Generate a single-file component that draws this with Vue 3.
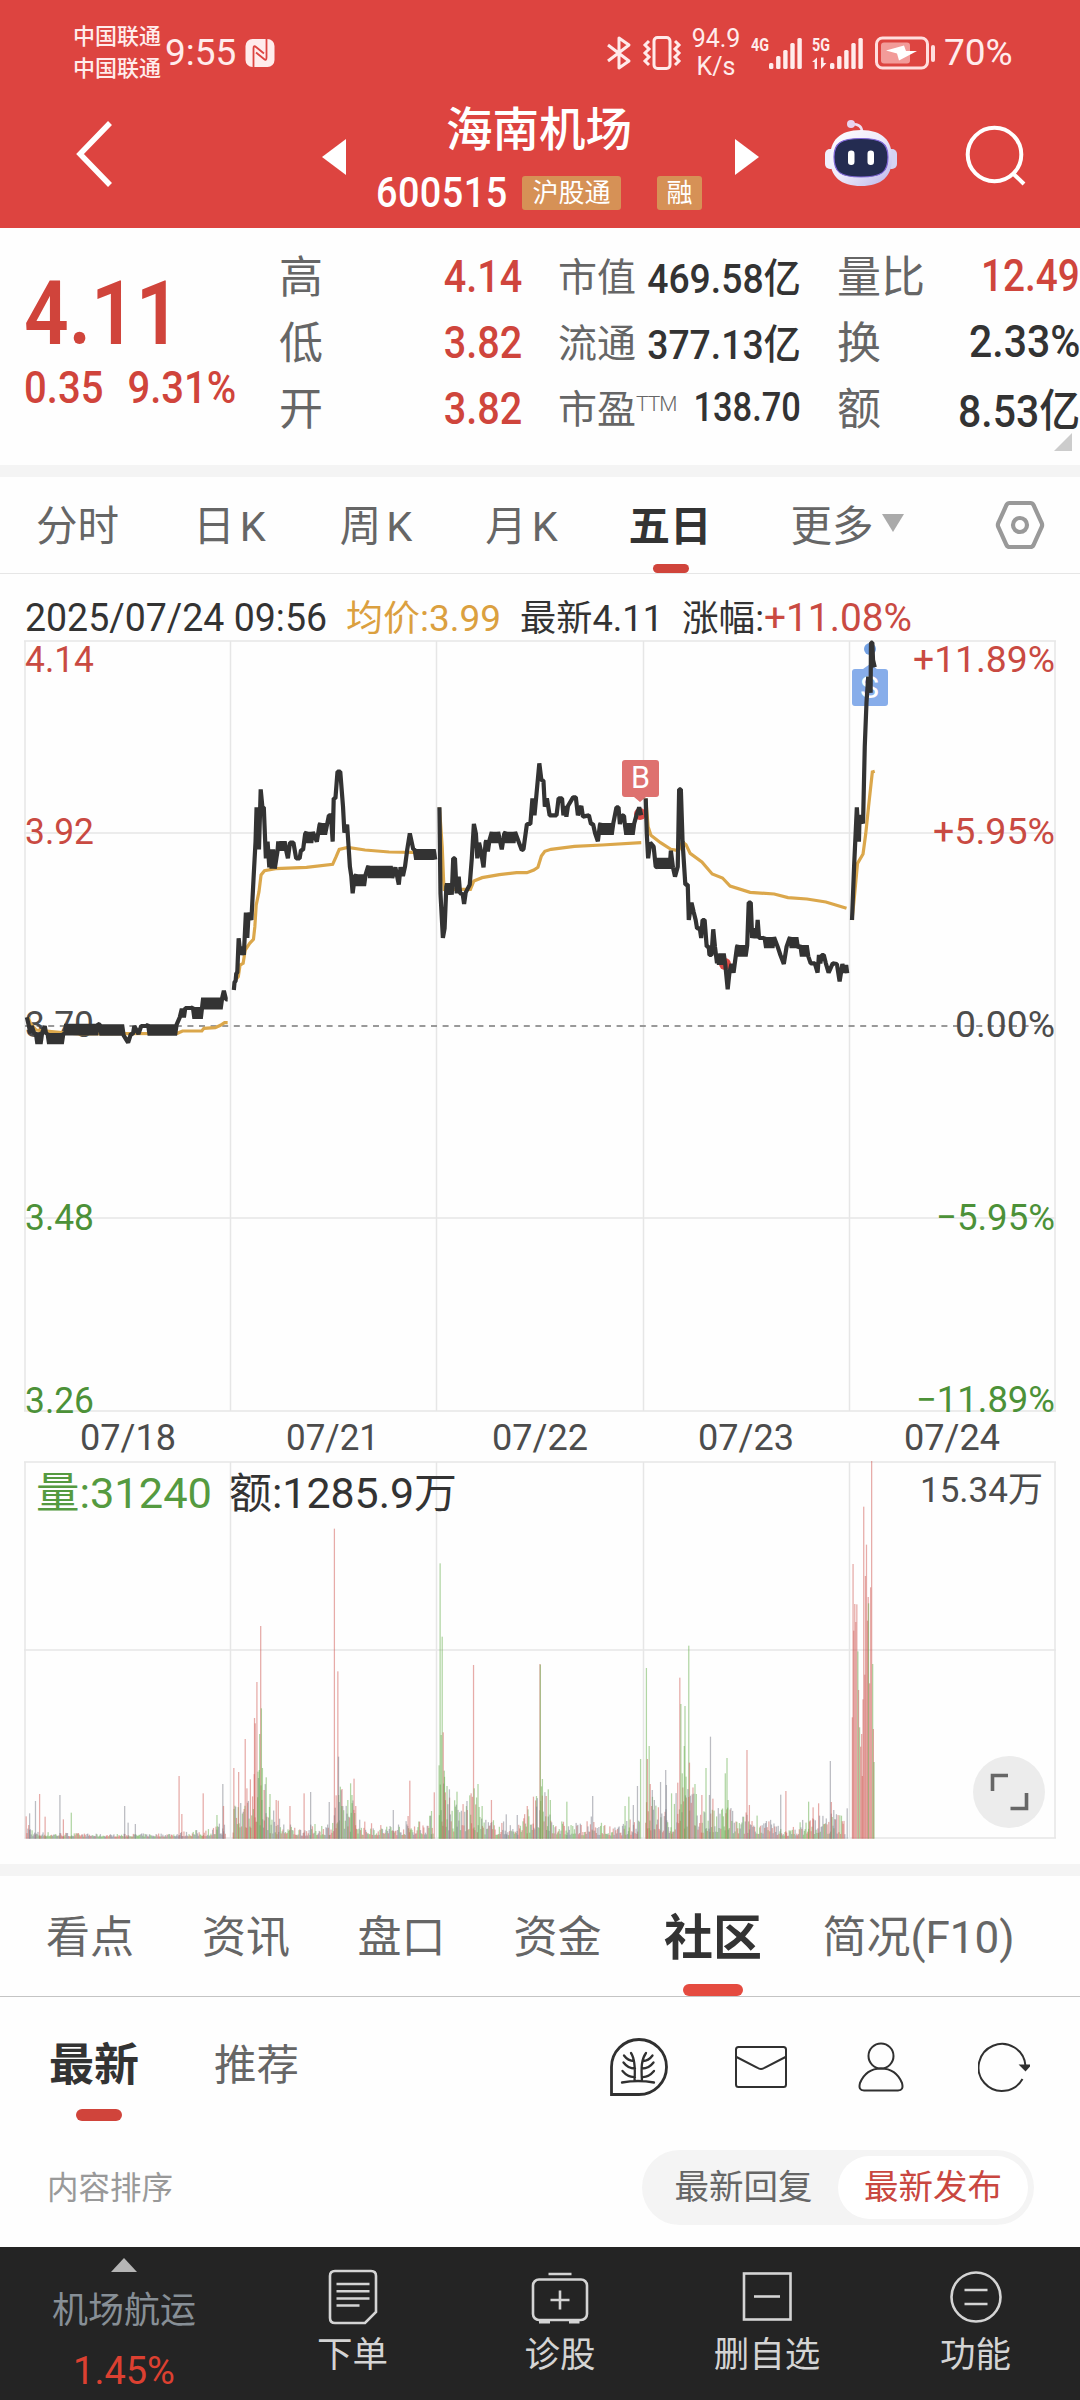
<template>
  <div class="stock-page">
    <header class="page-header">
      <div class="status-bar">
        <div class="carriers">
          <span>中国联通</span>
          <span>中国联通</span>
        </div>
        <span class="clock">9:55</span>
        <svg class="nfc" width="30" height="30" viewBox="0 0 30 30">
          <rect x="0.5" y="1" width="29" height="28" rx="7" fill="#ffecec" />
          <path d="M8.500 29V10.500Q8.500 7 11 9L19 15.500" fill="none" stroke="#dd4440" stroke-width="1.800" />
          <path d="M21.500 1V19.500Q21.500 23 19 21L11 14.500" fill="none" stroke="#dd4440" stroke-width="1.800" />
        </svg>
        <div class="status-right">
          <svg width="26" height="36" viewBox="0 0 26 36" fill="none" stroke="#ffeaea" stroke-width="3">
            <path d="M2 10L23 26L13 33V3L23 10L2 26" stroke-linejoin="round" />
          </svg>
          <svg class="vibrate" width="40" height="36" viewBox="0 0 40 36" fill="none" stroke="#ffeaea" stroke-width="3">
            <rect x="12" y="2.500" width="16" height="31" rx="3.500" />
            <path d="M7 6l-4 4 4 4-4 4 4 4-4 4 4 4M33 6l4 4-4 4 4 4-4 4 4 4-4 4" />
          </svg>
          <div class="net-speed"><span>94.9</span><span>K/s</span></div>
          <svg class="signal" width="52" height="36" viewBox="0 0 52 36" fill="#ffecec">
            <text x="0" y="16" font-size="18" font-weight="700" textLength="18" lengthAdjust="spacingAndGlyphs">4G</text>
            <rect v-for="(h, i) in signalBars" :key="i" :x="18 + i * 7.1" :y="34 - h" width="4.400" :height="h" rx="1.500" />
          </svg>
          <svg class="signal second" width="52" height="36" viewBox="0 0 52 36" fill="#ffecec">
            <text x="0" y="16" font-size="18" font-weight="700" textLength="18" lengthAdjust="spacingAndGlyphs">5G</text>
            <path d="M0 27L5 22.500V34H2.600V27ZM9 22.500h2.500v5.500h3L9 34Z" />
            <rect v-for="(h, i) in signalBars" :key="i" :x="18 + i * 7.1" :y="34 - h" width="4.400" :height="h" rx="1.500" />
          </svg>
          <svg class="battery" width="61" height="34" viewBox="0 0 61 34">
            <rect x="1.500" y="2" width="51" height="30" rx="6" fill="none" stroke="#ffdede" stroke-width="3" />
            <rect x="6" y="6.500" width="29" height="21" rx="3" fill="#f29b99" />
            <path d="M11 14.500L29 9.500L31 15H42L24 24.500L22 17.500Z" fill="#fff" />
            <rect x="56" y="9" width="4" height="17" rx="2" fill="#ffdede" />
          </svg>
          <span class="battery-text">70%</span>
        </div>
      </div>

      <div class="nav-bar">
        <svg class="back" width="38" height="70" viewBox="0 0 38 70" fill="none" stroke="#fff" stroke-width="5.500">
          <path d="M35 4L5 35L35 66" />
        </svg>
        <svg class="prev" width="24" height="36" viewBox="0 0 24 36"><path d="M24 0V36L0 18Z" fill="#fff" /></svg>
        <div class="nav-title">
          <h1>海南机场</h1>
          <div class="code-row">
            <span class="code">600515</span>
            <span class="badge">沪股通</span>
            <span class="badge short">融</span>
          </div>
        </div>
        <svg class="next" width="24" height="36" viewBox="0 0 24 36"><path d="M0 0V36L24 18Z" fill="#fff" /></svg>
        <svg class="robot" width="72" height="68" viewBox="0 0 72 68">
          <defs>
            <linearGradient id="shell" x1="0" y1="0" x2="1" y2="1">
              <stop offset="0" stop-color="#ffffff" />
              <stop offset="0.500" stop-color="#eeeafa" />
              <stop offset="1" stop-color="#b9b5ea" />
            </linearGradient>
          </defs>
          <path d="M27 5q10 0 10 8" fill="none" stroke="#f0dff0" stroke-width="2.500" />
          <circle cx="26" cy="5" r="4" fill="#e8d4ee" />
          <rect x="0" y="30" width="11" height="20" rx="5" fill="#f0effb" />
          <rect x="61" y="30" width="11" height="20" rx="5" fill="#d5d2f2" />
          <path d="M36 11C58 11 67 22 67 39C67 58 56 67 36 67C16 67 5 58 5 39C5 22 14 11 36 11Z" fill="url(#shell)" />
          <path d="M36 19.500C56 19.500 63 24 63 38C63 53 57 58 36 58C15 58 9 53 9 38C9 24 16 19.500 36 19.500Z" fill="#242c51" stroke="#8067d8" stroke-width="1.200" />
          <rect x="23" y="31.500" width="6.500" height="14.500" rx="3.200" fill="#fff" />
          <rect x="42.500" y="31.500" width="6.500" height="14.500" rx="3.200" fill="#fff" />
        </svg>
        <svg class="search" width="62" height="62" viewBox="0 0 62 62" fill="none" stroke="#fff" stroke-width="4">
          <circle cx="30.500" cy="30.500" r="26.800" />
          <path d="M48.500 49L60 60" />
        </svg>
      </div>
    </header>

    <section class="quote">
      <div class="quote-main">
        <div class="price">4.11</div>
        <div class="change"><span>0.35</span><span>9.31%</span></div>
      </div>
      <dl v-for="(col, i) in quoteCols" :key="i" class="quote-col" :class="'col-' + (i + 1)">
        <div v-for="item in col" :key="item.label" class="quote-row">
          <dt>{{ item.label }}<sup v-if="item.sup">{{ item.sup }}</sup></dt>
          <dd :class="{ up: item.up, narrow: item.sup }">{{ item.value }}</dd>
        </div>
      </dl>
      <i class="corner"></i>
    </section>

    <nav class="chart-tabs">
      <span
        v-for="tab in chartTabs"
        :key="tab"
        class="chart-tab"
        :class="{ active: tab === '五日', spaced: tab.endsWith('K') }"
      >{{ tab }}<i v-if="tab === '更多'" class="caret"></i></span>
      <svg width="50" height="50" viewBox="0 0 50 50" fill="none" stroke="#999" stroke-width="4.200">
        <path d="M14.500 3H35.500Q37.500 3 38.500 5L46.500 22.500Q47.800 25 46.500 27.500L38.500 45Q37.500 47 35.500 47H14.500Q12.500 47 11.500 45L3.500 27.500Q2.200 25 3.500 22.500L11.500 5Q12.500 3 14.500 3Z" />
        <circle cx="25" cy="25" r="7" />
      </svg>
    </nav>

    <svg class="chart" width="1080" height="1290" viewBox="0 574 1080 1290">
      <g class="grid">
        <path d="M24 641H1056M24 833H1056M24 1218H1056M24 1411H1056M24 1462H1056M24 1650H1056M24 1838H1056" />
        <path v-for="x in gridX" :key="x" :d="`M${x} 641V1411M${x} 1462V1838`" />
      </g>
      <path d="M25 1026H1055" class="zero-line" />

      <text
        v-for="t in chartTexts"
        :key="t.text + t.x"
        :x="t.x"
        :y="t.y"
        :textLength="t.w"
        lengthAdjust="spacingAndGlyphs"
        :font-size="t.size || 37"
        :fill="t.color"
      >{{ t.text }}</text>

      <!-- buy / sell markers sit under the price line -->
      <circle cx="640" cy="814" r="6" fill="#dc4a45" />
      <circle cx="725" cy="964" r="6" fill="#dc4a45" />
      <path d="M625 760h31q3 0 3 3v31q0 3-3 3h-10l-6 5-6-5h-9q-3 0-3-3v-31q0-3 3-3Z" fill="#de716f" />
      <text x="631" y="788" font-size="32" fill="#fff" textLength="19" lengthAdjust="spacingAndGlyphs">B</text>
      <circle cx="870" cy="649" r="6" fill="#73a1e3" />
      <path d="M855 669h8l7-5 7 5h8q3 0 3 3v31q0 3-3 3h-30q-3 0-3-3v-31q0-3 3-3Z" fill="#87adea" />
      <text x="860" y="698" font-size="32" fill="#fff" textLength="19" lengthAdjust="spacingAndGlyphs">S</text>

      <g transform="translate(0 580) scale(0.34439 0.33333)">
        <polyline v-for="(line, i) in avgLines" :key="'a' + i" :points="line" class="avg-line" />
        <path v-for="(line, i) in priceLines" :key="'p' + i" :d="line" class="price-line" />
      </g>
      <g transform="translate(0 1360) scale(0.34439 0.33333)">
        <rect
          v-for="(bar, i) in volumeBars"
          :key="i"
          :x="bar.x - 1.8"
          :y="bar.y"
          width="3.600"
          :height="1436 - bar.y"
          :fill="bar.color"
          fill-opacity="0.500"
        />
      </g>

      <circle cx="1009" cy="1792" r="36" fill="#ececec" />
      <path d="M992.500 1791V1775.500H1008M1010.500 1808.500H1026.500V1793" fill="none" stroke="#666" stroke-width="3.600" />
    </svg>

    <nav class="section-tabs">
      <span v-for="tab in sectionTabs" :key="tab" :class="{ active: tab === '社区' }">{{ tab }}</span>
    </nav>

    <section class="community">
      <div class="sub-tabs">
        <span class="sub-tab active">最新</span>
        <span class="sub-tab">推荐</span>
        <div class="tools">
          <svg width="60" height="60" viewBox="0 0 60 60" fill="none" stroke="#303030" stroke-width="2.800">
            <path d="M2.500 57.500V30A27.500 27.500 0 1 1 30 57.500Z" />
            <path d="M13 45.500Q29 42.500 45 45.500M25.500 44C26.500 30 26 22 22 16M33 44C32 30 32.500 22 37 16M15 18.500Q19 24 25 24M14.500 25.500Q19 31.500 26 31.500M13.500 34Q19 40.500 26 40M43.500 18.500Q39.500 24 34 24M44.500 25.500Q40 31.500 33 31.500M45 34Q39.500 40.500 33 40" stroke-width="2.300" stroke-linecap="round" />
          </svg>
          <svg class="mail" width="52" height="42" viewBox="0 0 52 42" fill="none" stroke="#303030" stroke-width="2">
            <rect x="1" y="1" width="50" height="40" rx="2.500" />
            <path d="M1.500 11L22 21.500Q26 24.500 30 21.500L50.500 11" />
          </svg>
          <svg class="user" width="46" height="50" viewBox="0 0 46 50" fill="none" stroke="#303030" stroke-width="2">
            <circle cx="23" cy="14" r="12.500" />
            <path d="M6 48.500Q0 48.500 2 41Q8 26.500 23 26.500Q38 26.500 44 41Q46 48.500 40 48.500Z" />
          </svg>
          <svg class="refresh" width="52" height="50" viewBox="0 0 52 50" fill="none" stroke="#303030" stroke-width="2">
            <path d="M44.500 37A23.500 23.500 0 1 1 47.500 24" />
            <path d="M43 23.500H51.500L47.500 28Z" fill="#303030" />
          </svg>
        </div>
      </div>
      <div class="sort-row">
        <span class="sort-label">内容排序</span>
        <div class="sort-switch">
          <span>最新回复</span>
          <span class="active">最新发布</span>
        </div>
      </div>
    </section>

    <footer class="bottom-bar">
      <div class="sector">
        <i class="arrow-up"></i>
        <span class="sector-name">机场航运</span>
        <span class="sector-rate">1.45%</span>
      </div>
      <div class="action">
        <svg width="60" height="60" viewBox="0 0 60 60" fill="none" stroke="#d4d4d4" stroke-width="2.600">
          <path d="M12 4H48Q53 4 53 9V45L42 56H12Q7 56 7 51V9Q7 4 12 4Z" />
          <path d="M13.500 17H46.500M13.500 24.300H46.500M13.500 31.500H46.500M13.500 38.500H36.500" />
        </svg>
        <span>下单</span>
      </div>
      <div class="action">
        <svg width="60" height="60" viewBox="0 0 60 60" fill="none" stroke="#d4d4d4" stroke-width="2.600">
          <rect x="3" y="12.500" width="54" height="40.500" rx="6" />
          <path d="M18.500 7H41.500M20.500 33H39.500M30 23.500V42.500" />
          <path d="M9 55H20M39 55H49.500" stroke-width="3" />
        </svg>
        <span>诊股</span>
      </div>
      <div class="action">
        <svg width="60" height="60" viewBox="0 0 60 60" fill="none" stroke="#d4d4d4" stroke-width="2.600">
          <rect x="7" y="6.500" width="46.500" height="46" />
          <path d="M17 29.500H43" />
        </svg>
        <span>删自选</span>
      </div>
      <div class="action">
        <svg width="60" height="60" viewBox="0 0 60 60" fill="none" stroke="#d4d4d4" stroke-width="2.600">
          <circle cx="30" cy="30" r="24.500" />
          <path d="M18.500 23H41.500M18.500 37H41.500" />
        </svg>
        <span>功能</span>
      </div>
    </footer>
  </div>
</template>

<script setup>
const signalBars = [6, 13, 19, 26, 31]

const quoteCols = [
  [
    { label: '高', value: '4.14', up: true },
    { label: '低', value: '3.82', up: true },
    { label: '开', value: '3.82', up: true },
  ],
  [
    { label: '市值', value: '469.58亿' },
    { label: '流通', value: '377.13亿' },
    { label: '市盈', sup: 'TTM', value: '138.70' },
  ],
  [
    { label: '量比', value: '12.49', up: true },
    { label: '换', value: '2.33%' },
    { label: '额', value: '8.53亿' },
  ],
]

const chartTabs = ['分时', '日K', '周K', '月K', '五日', '更多']
const sectionTabs = ['看点', '资讯', '盘口', '资金', '社区', '简况(F10)']

const RED = '#c94a42'
const GREEN = '#4c9138'
const DARK = '#333'
const GRAY = '#4c4c4c'

const gridX = [25, 230.5, 436.5, 643.5, 849.5, 1055]

const chartTexts = [
  { text: '2025/07/24 09:56', x: 25, y: 631, w: 302, color: DARK, size: 38 },
  { text: '均价:3.99', x: 346, y: 631, w: 155, color: '#dba03f', size: 36 },
  { text: '最新4.11', x: 520, y: 631, w: 143, color: DARK, size: 36 },
  { text: '涨幅:', x: 682, y: 631, w: 82, color: DARK, size: 36 },
  { text: '+11.08%', x: 764, y: 631, w: 148, color: RED, size: 38 },
  { text: '4.14', x: 25, y: 671.5, w: 69, color: RED },
  { text: '3.92', x: 25, y: 844, w: 69, color: RED },
  { text: '3.70', x: 25, y: 1036.5, w: 69, color: GRAY },
  { text: '3.48', x: 25, y: 1229.5, w: 69, color: GREEN },
  { text: '3.26', x: 25, y: 1412.5, w: 69, color: GREEN },
  { text: '+11.89%', x: 913, y: 671.5, w: 142, color: RED },
  { text: '+5.95%', x: 933, y: 844, w: 122, color: RED },
  { text: '0.00%', x: 955, y: 1036.5, w: 100, color: GRAY },
  { text: '−5.95%', x: 936, y: 1229.5, w: 119, color: GREEN },
  { text: '−11.89%', x: 916, y: 1412, w: 139, color: GREEN, size: 36 },
  { text: '07/18', x: 80, y: 1449.5, w: 96, color: GRAY },
  { text: '07/21', x: 286, y: 1449.5, w: 93, color: GRAY },
  { text: '07/22', x: 492, y: 1449.5, w: 96, color: GRAY },
  { text: '07/23', x: 698, y: 1449.5, w: 96, color: GRAY },
  { text: '07/24', x: 904, y: 1449.5, w: 96, color: GRAY, size: 36 },
  { text: '量:31240', x: 36, y: 1507.5, w: 176, color: '#559a40', size: 43 },
  { text: '额:1285.9万', x: 229, y: 1507.5, w: 228, color: DARK, size: 42 },
  { text: '15.34万', x: 920, y: 1502, w: 123, color: GRAY, size: 35 },
]

// [x, y] is a point, [x1, x2, top, bottom] a stretch that ticks between two prices
const priceDays = [
  [[78, 1312], [84, 1338], [88, 1360], [92, 1338], [100, 1362], [104, 124, 1362, 1388], [130, 1338], [134, 1362], [138, 186, 1364, 1388], [190, 1362], [192, 285, 1336, 1362], [290, 362, 1338, 1362], [372, 1388], [380, 1362], [386, 1362], [390, 1338], [402, 1362], [410, 1338], [425, 1338], [430, 515, 1338, 1362], [522, 1312], [528, 1286], [534, 1312], [538, 1284], [556, 1284], [560, 585, 1286, 1312], [590, 646, 1257, 1284], [650, 1232], [656, 1258], [661, 1258]],
  [[679, 1230], [681, 1206], [684, 1204], [686, 1180], [689, 1178], [693, 1075], [698, 1125], [702, 1100], [708, 1125], [714, 998], [718, 1074], [722, 998], [730, 1020], [736, 900], [742, 785], [745, 682], [752, 808], [757, 628], [762, 682], [766, 682], [772, 835], [777, 785], [782, 862], [784, 798, 812, 862], [806, 812], [808, 832, 788, 808], [836, 835], [842, 788], [852, 788], [860, 835], [870, 835], [874, 810], [880, 810], [886, 762], [890, 912, 760, 785], [920, 785], [928, 734], [930, 946, 734, 760], [955, 706], [961, 706], [966, 785], [969, 655], [974, 655], [980, 575], [988, 575], [996, 680], [1000, 758], [1008, 734], [1016, 860], [1020, 888], [1024, 940], [1030, 890], [1034, 1064, 888, 914], [1068, 862], [1070, 1140, 862, 890], [1148, 862], [1153, 888], [1158, 914], [1163, 862], [1170, 888], [1176, 860], [1182, 812], [1190, 760], [1200, 808], [1204, 1264, 812, 835]],
  [[1276, 682], [1279, 940], [1286, 1074], [1291, 1045], [1296, 920], [1298, 1312, 914, 940], [1316, 835], [1321, 835], [1326, 940], [1332, 890], [1336, 940], [1342, 942], [1343, 1354, 942, 968], [1364, 914], [1370, 835], [1376, 732], [1382, 762], [1386, 835], [1391, 788], [1396, 810], [1404, 862], [1410, 788], [1412, 1424, 785, 810], [1428, 1448, 760, 785], [1457, 808], [1464, 762], [1468, 1500, 760, 785], [1506, 785], [1515, 810], [1520, 808], [1530, 732], [1540, 732], [1546, 655], [1552, 706], [1558, 640], [1566, 550], [1572, 600], [1578, 602], [1582, 680], [1588, 655], [1596, 706], [1616, 706], [1622, 655], [1632, 655], [1636, 706], [1640, 1650, 682, 706], [1664, 652], [1672, 652], [1678, 706], [1686, 682], [1688, 1696, 682, 706], [1710, 706], [1716, 732], [1722, 732], [1728, 760], [1736, 784], [1742, 734], [1744, 1782, 734, 760], [1790, 682], [1796, 682], [1800, 732], [1806, 706], [1812, 708], [1814, 1842, 734, 760], [1848, 706], [1856, 682], [1862, 706]],
  [[1875, 655], [1878, 760], [1882, 835], [1888, 788], [1898, 800], [1904, 860], [1910, 862], [1912, 1946, 838, 862], [1948, 812], [1954, 862], [1960, 890], [1968, 860], [1972, 628], [1977, 628], [1982, 786], [1990, 914], [1997, 914], [2000, 1020], [2008, 968], [2014, 995], [2020, 1020], [2024, 1045], [2032, 1045], [2036, 1074], [2040, 1020], [2046, 1020], [2052, 1100], [2058, 1100], [2060, 1125], [2066, 1125], [2071, 1048], [2076, 1100], [2082, 1150], [2083, 2108, 1125, 1150], [2113, 1228], [2118, 1178], [2124, 1152], [2130, 1178], [2140, 1100], [2142, 2170, 1100, 1125], [2174, 968], [2180, 968], [2184, 1074], [2190, 1045], [2196, 1074], [2200, 1020], [2204, 1074], [2218, 1074], [2220, 2252, 1076, 1100], [2258, 1100], [2266, 1125], [2276, 1152], [2284, 1100], [2292, 1076], [2294, 2318, 1076, 1100], [2324, 2348, 1100, 1125], [2354, 1150], [2366, 1150], [2374, 1178], [2378, 1125], [2382, 1150], [2386, 1125], [2392, 1125], [2398, 1150], [2406, 1178], [2418, 1150], [2430, 1152], [2438, 1204], [2446, 1152], [2452, 1178], [2457, 1155], [2460, 1180]],
  [[2474, 1020], [2480, 860], [2488, 682], [2494, 785], [2496, 706], [2506, 730], [2511, 500], [2516, 368], [2521, 290], [2528, 338], [2529, 188], [2533, 188], [2535, 240], [2540, 262]],
]

const priceLines = priceDays.map((day) => {
  const pts = []
  for (const seg of day) {
    if (seg.length === 2) {
      pts.push(seg.join(' '))
      continue
    }
    const [x1, x2, top, bottom] = seg
    let down = false
    for (let x = x1; x <= x2; x += 4.6) {
      pts.push(`${x.toFixed(1)} ${down ? bottom + 4 : top - 4}`)
      down = !down
    }
  }
  return 'M' + pts.join('L')
})

const avgLines = [
  '82,1312 88,1330 105,1350 180,1358 230,1362 350,1361 515,1360 530,1353 586,1353 592,1345 625,1343 640,1336 652,1328 661,1328',
  '684,1200 692,1190 697,1155 706,1150 712,1110 725,1090 736,1078 740,1040 744,975 752,935 758,885 768,872 800,866 890,862 966,853 976,830 985,808 1010,802 1060,810 1130,816 1200,817 1264,817',
  '1276,682 1284,800 1288,900 1290,928 1366,928 1376,903 1400,893 1450,884 1500,878 1530,878 1550,870 1562,862 1572,828 1582,814 1600,808 1668,799 1748,795 1862,788',
  '1875,655 1882,740 1890,766 1918,788 1948,808 1970,812 1982,786 1992,794 2004,820 2038,846 2068,882 2098,894 2120,918 2178,937 2248,942 2288,953 2343,957 2398,966 2458,985',
  '2474,1020 2480,960 2490,850 2506,822 2514,760 2522,680 2533,576 2540,574',
]

const volColors = { r: '#cf5852', g: '#64ad4a', n: '#777a85' }

const spikes = `
86,1360n 103,1323n 115,1302r 131,1370r 174,1305n 184,1378r 207,1358g 362,1338n 372,1388n 393,1392n 520,1248r 528,1362r 590,1300r 630,1365g 647,1272n 649,1338r
679,1224r 693,1236r 712,1137r 717,1285r 727,1258r 739,1074r 741,1090r 746,966r 749,1235g 754,1122g 757,798r 759,1045g 762,1224g 767,1290r 773,1252g 784,1302g 802,1320r 808,1322r 842,1338r 883,1300r 902,1296n 956,1326n 971,506r 976,1306r 981,934r 983,1190n 985,1326n 992,1338g 1010,1320g 1018,1270g 1022,1305g 1028,1256r 1033,1338r 1142,1350n 1185,1368r 1190,1262r 1253,1353g 1261,1297r
1275,1216g 1278,610g 1281,1125g 1284,830g 1287,1117r 1290,1232g 1293,1297r 1298,1278g 1305,1288n 1327,1295g 1356,1323n 1368,1300r 1375,915r 1377,1285g 1388,1272g 1400,1338g 1427,1320r 1470,1363n 1502,1365n 1531,1338r 1549,1310r 1558,1340n 1568,912r 1569,914g 1575,1257g 1586,1308r 1592,1288g 1598,1320g 1646,1325g 1721,1308n 1815,1338g 1826,1310g 1839,1335n 1851,1278n 1860,1197g
1877,924g 1880,1197r 1885,1158g 1888,1272r 1894,1290n 1900,1320n 1918,1266n 1933,1230n 1935,1275n 1950,1300g 1968,1268r 1974,953r 1977,1032g 1981,1240g 1987,1158g 1989,1038g 1992,1250g 2000,857g 2002,1208r 2018,1272g 2038,1305r 2050,1224g 2060,1305n 2063,1130n 2070,1316r 2106,1240g 2111,1194g 2114,1320g 2169,1170r 2176,1335r 2267,1304n 2282,1293r 2348,1325g 2361,1342r 2377,1330r 2411,1203n 2414,1326r 2421,1350n 2460,1345n
2475,1072r 2477,612r 2479,812r 2482,732r 2485,786r 2488,733r 2491,874g 2493,990r 2496,1102g 2499,1160r 2502,1122r 2504,1248r 2506,1018r 2508,440r 2511,944r 2513,648r 2516,554r 2519,782r 2521,711r 2522,730g 2525,970r 2528,682r 2531,303r 2534,912g 2536,1107r 2538,1206g`

// [x, usual bar height] per trading day
const envelopes = [
  [[76, 70], [90, 40], [100, 18], [300, 9], [480, 12], [600, 25], [655, 50]],
  [[677, 110], [700, 150], [745, 260], [765, 230], [780, 100], [820, 50], [870, 30], [960, 50], [985, 160], [1030, 120], [1050, 50], [1110, 40], [1180, 50], [1258, 70]],
  [[1276, 330], [1290, 240], [1310, 120], [1380, 130], [1410, 60], [1500, 40], [1560, 140], [1575, 160], [1600, 80], [1640, 45], [1700, 45], [1720, 65], [1780, 28], [1840, 60], [1857, 90]],
  [[1875, 200], [1890, 140], [1950, 70], [1975, 230], [2000, 190], [2030, 110], [2080, 80], [2110, 130], [2140, 55], [2180, 90], [2250, 45], [2290, 22], [2350, 70], [2420, 80], [2455, 70]],
]

const volumeBars = []
let seed = 7
const rand = () => {
  seed = (seed * 16807) % 2147483647
  return seed / 2147483647
}

for (const env of envelopes) {
  let k = 0
  for (let x = env[0][0]; x <= env[env.length - 1][0]; x += 2.45) {
    while (k < env.length - 2 && x > env[k + 1][0]) k++
    const [x1, h1] = env[k]
    const [x2, h2] = env[k + 1]
    const max = h1 + ((h2 - h1) * (x - x1)) / (x2 - x1)
    const c = rand()
    const kind = c < 0.34 ? 'r' : c < 0.68 ? 'g' : 'n'
    volumeBars.push({ x, y: 1436 - 5 - max * (0.12 + 0.88 * rand() ** 1.7), color: volColors[kind] })
  }
}
for (const s of spikes.trim().split(/\s+/)) {
  const [x, y] = s.slice(0, -1).split(',').map(Number)
  volumeBars.push({ x, y, color: volColors[s.slice(-1)] })
}
</script>

<style>
body {
  margin: 0;
  background: #fff;
}
</style>

<style scoped>
.stock-page {
  width: 1080px;
  height: 2400px;
  overflow: hidden;
  display: flex;
  flex-direction: column;
  background: #fefefe;
  color: #333;
  font-family: Roboto, "Noto Sans CJK SC", sans-serif;
}

svg { display: block; flex-shrink: 0; }

.page-header { height: 228px; background: #dd4440; color: #fff; flex-shrink: 0; }

.status-bar {
  display: flex;
  align-items: center;
  height: 105px;
  padding-left: 73px;
  color: #ffecec;
}

.carriers {
  display: flex;
  flex-direction: column;
  width: 92px;
  font-size: 22px;
  line-height: 32px;
  font-weight: 500;
}

.clock { width: 80px; font-size: 37px; }

.status-right { display: flex; align-items: center; margin-left: 331px; }
.vibrate { margin-left: 10px; }

.net-speed {
  display: flex;
  flex-direction: column;
  align-items: center;
  width: 50px;
  margin: 0 10px 0 9px;
  font-size: 25px;
  line-height: 28px;
}

.signal.second { margin-left: 9px; }
.battery { margin-left: 11px; }
.battery-text { margin-left: 8px; font-size: 37px; }

.nav-bar { display: flex; align-items: flex-start; height: 123px; }
.back { margin: 14px 0 0 75px; }
.prev { margin: 34px 0 0 209px; }
.next { margin: 34px 0 0 33px; }
.robot { margin: 14px 0 0 66px; }
.search { margin: 19px 0 0 67px; }

.nav-title { width: 326px; margin-left: 30px; }

.nav-title h1 {
  margin: 1px 0 0;
  text-align: center;
  font-size: 46.5px;
  line-height: 48px;
  font-weight: 500;
}

.code-row { display: flex; align-items: center; margin-top: 22px; height: 34px; }

.code {
  width: 146px;
  font-size: 42px;
  line-height: 34px;
  font-weight: 500;
  letter-spacing: 0.5px;
  transform: scaleX(0.9);
  transform-origin: left;
}

.badge {
  width: 99px;
  height: 34px;
  border-radius: 3px;
  background: #d69156;
  font-size: 26px;
  line-height: 34px;
  text-align: center;
}

.badge.short { width: 45px; margin-left: 36px; }

.quote {
  position: relative;
  display: flex;
  height: 222px;
  padding-top: 15px;
  border-bottom: 12px solid #f4f4f4;
  box-sizing: content-box;
  flex-shrink: 0;
}

.quote-main { width: 255px; padding-left: 24px; color: #d0443b; }

.price {
  margin-top: 19px;
  height: 104px;
  font-size: 89px;
  line-height: 104px;
  font-weight: 600;
  transform: scaleX(0.88);
  transform-origin: left;
}

.change {
  display: flex;
  gap: 27px;
  font-size: 45px;
  line-height: 44px;
  font-weight: 500;
  white-space: nowrap;
  transform: scaleX(0.89);
  transform-origin: left;
}

.quote-col { margin: 0; }
.col-1 { width: 243px; }
.col-2 { width: 243px; margin-left: 36px; }
.col-3 { width: 243px; margin-left: 36px; }

.quote-row {
  display: flex;
  justify-content: space-between;
  align-items: center;
  height: 66px;
  white-space: nowrap;
}

.quote-row dt { margin-top: -5px; font-size: 44px; color: #666; }

.quote-row dd {
  margin: 0;
  font-size: 45px;
  font-weight: 500;
  transform: scaleX(0.88);
  transform-origin: right;
}

.quote-row dd.up { color: #cf453c; }
.col-3 dd { margin-top: -2px; transform: scaleX(0.91); }
.col-3 dd.up { transform: scaleX(0.86); }
.col-2 dt { font-size: 39px; }
.col-2 dd { margin: -2px 0 0 -20px; font-size: 41px; transform: scaleX(0.91); }
.col-2 dd.narrow { transform: scaleX(0.84); }
.col-2 sup { font-size: 21px; font-weight: 300; line-height: 0; vertical-align: 12px; letter-spacing: -1px; }

.corner {
  position: absolute;
  right: 8px;
  bottom: 14px;
  border-left: 18px solid transparent;
  border-bottom: 18px solid #ccc;
}

.chart-tabs {
  display: grid;
  grid-template-columns: 155px 151px 142px 149px 146px 208px 138px;
  align-items: center;
  justify-items: center;
  height: 96px;
  border-bottom: 1px solid #e6e6e6;
  flex-shrink: 0;
}

.chart-tab {
  position: relative;
  display: flex;
  align-items: center;
  height: 92px;
  padding-bottom: 4px;
  font-size: 41.5px;
  color: #666;
}

.chart-tab.spaced { letter-spacing: 5px; margin-left: 3px; }
.chart-tab.active { font-weight: 700; color: #333; }

.chart-tab.active::after {
  content: '';
  position: absolute;
  left: 50%;
  bottom: 0;
  width: 36px;
  height: 9px;
  margin-left: -17px;
  border-radius: 5px;
  background: #d0443b;
}

.caret {
  margin-left: 8px;
  border: 11px solid transparent;
  border-top: 18px solid #aaa;
  border-bottom: 0;
}

.chart { font-family: Roboto, "Noto Sans CJK SC", sans-serif; }
.grid path { fill: none; stroke: #e6e6e6; stroke-width: 1.5; }
.zero-line { stroke: #999; stroke-width: 2; stroke-dasharray: 6 5.6; }
.price-line { fill: none; stroke: #333; stroke-width: 4.2; stroke-linejoin: bevel; vector-effect: non-scaling-stroke; }
.avg-line { fill: none; stroke: #dba74b; stroke-width: 3.2; vector-effect: non-scaling-stroke; }

.section-tabs {
  display: grid;
  grid-template-columns: 156px 156px 155px 157px 154px 257px;
  height: 120px;
  padding-left: 12px;
  border-top: 12px solid #f4f4f4;
  border-bottom: 1px solid #c4c4c4;
  flex-shrink: 0;
}

.section-tabs span {
  position: relative;
  text-align: center;
  font-size: 44px;
  line-height: 125px;
  height: 120px;
  color: #666;
}

.section-tabs .active { font-size: 49px; font-weight: 700; color: #333; }

.section-tabs .active::after {
  content: '';
  position: absolute;
  left: 47px;
  bottom: 0;
  width: 60px;
  height: 12px;
  border-radius: 6px;
  background: #e54b40;
}

.community { flex: 1; }
.sub-tabs { display: flex; height: 134px; padding-left: 49px; }

.sub-tab {
  position: relative;
  width: 165px;
  height: 134px;
  font-size: 42.5px;
  line-height: 137px;
  color: #666;
}

.sub-tab.active { font-size: 45px; font-weight: 700; color: #333; }

.sub-tab.active::after {
  content: '';
  position: absolute;
  left: 27px;
  top: 112px;
  width: 46px;
  height: 12px;
  border-radius: 6px;
  background: #d0443b;
}

.tools {
  display: flex;
  align-items: center;
  height: 140px;
  margin-left: 230px;
}

.mail { margin-left: 66px; }
.user { margin-left: 71px; }
.refresh { margin-left: 74px; }

.sort-row {
  display: flex;
  align-items: center;
  justify-content: space-between;
  height: 75px;
  margin-top: 19px;
  padding: 0 46px 0 47px;
}

.sort-label { margin-top: -5px; font-size: 31.5px; color: #999; }

.sort-switch {
  display: flex;
  align-items: center;
  width: 392px;
  height: 75px;
  border-radius: 38px;
  background: #f4f4f4;
  font-size: 34.5px;
  color: #666;
}

.sort-switch span { width: 196px; text-align: center; line-height: 63px; padding-left: 7px; box-sizing: border-box; }

.sort-switch .active {
  width: 190px;
  padding: 0;
  border-radius: 32px;
  background: #fff;
  color: #c94740;
}

.bottom-bar {
  display: grid;
  grid-template-columns: 248px 209px 206px 208px 209px;
  height: 153px;
  background: #242424;
  flex-shrink: 0;
}

.sector, .action { display: flex; flex-direction: column; align-items: center; }

.arrow-up {
  margin-top: 11px;
  border: 13px solid transparent;
  border-top: 0;
  border-bottom: 14px solid #b5b5b5;
}

.sector-name { margin-top: 17px; font-size: 36px; line-height: 44px; color: #878f96; }
.sector-rate { margin-top: 16px; font-size: 38px; line-height: 44px; color: #dc4031; }
.action { padding-top: 20px; font-size: 35.5px; color: #d4d4d4; }
.action span { margin-top: 6px; line-height: 44px; }
</style>
